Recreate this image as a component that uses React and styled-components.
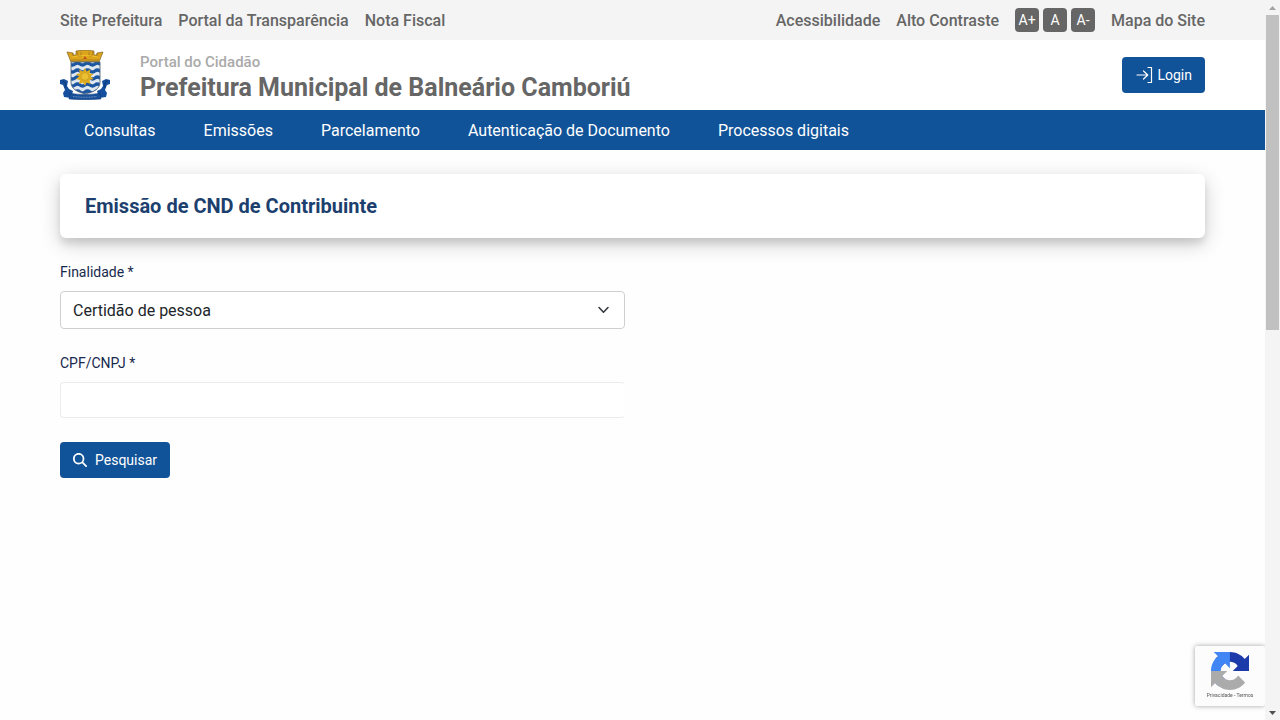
import React from "react";
import styled, { createGlobalStyle } from "styled-components";

const GlobalStyle = createGlobalStyle`
  *, *::before, *::after { box-sizing: border-box; }
  body {
    margin: 0;
    background: #fefefe;
    color: #212529;
    font: 400 16px/24px Roboto, "Liberation Sans", sans-serif;
    scrollbar-width: none;
  }
  button, input, select { font-family: inherit; }
  a { color: inherit; text-decoration: none; }
`;

const Shell = styled.div`
  display: grid;
  grid-template-columns: minmax(0, 1fr) 15px;
  min-height: 100vh;
`;

const Page = styled.div`
  min-width: 0;
`;

const TopBar = styled.div`
  display: flex;
  align-items: center;
  justify-content: space-between;
  min-height: 40px;
  padding: 0 60px;
  background: #f4f4f4;
  color: #666;
  font-weight: 500;
`;

const BarLink = styled.a`
  display: block;
  padding-top: 2px;
`;

const LinkGroup = styled.div`
  display: flex;
  align-items: center;
  gap: 16px;
`;

const SizeButtons = styled.div`
  display: flex;
  gap: 4px;
`;

const SizeButton = styled.button`
  width: 24px;
  height: 24px;
  padding: 0;
  border: 0;
  border-radius: 4px;
  background: #666;
  color: #fff;
  font-size: 14px;
  line-height: 24px;
  text-align: center;
`;

const Header = styled.header`
  display: flex;
  align-items: center;
  min-height: 70px;
  padding: 0 60px;
  background: #fff;
`;

const Brand = styled.a`
  display: flex;
  align-items: center;
  gap: 30px;
  margin-right: auto;
`;

const BrandText = styled.div`
  display: flex;
  flex-direction: column;
  padding-top: 4px;
`;

const Tagline = styled.span`
  color: #aaa;
  font-size: 15px;
  font-weight: 500;
  line-height: 20px;
`;

const CityName = styled.span`
  color: #666;
  font-size: 25px;
  font-weight: 700;
  line-height: 31px;
`;

const PrimaryButton = styled.button`
  display: inline-flex;
  align-items: center;
  gap: ${(p) => p.$gap}px;
  height: 36px;
  padding: 0 13px;
  border: 0;
  border-radius: 4px;
  background: #115398;
  color: #fff;
  font-size: 14px;
  line-height: 20px;
`;

const Nav = styled.nav`
  display: flex;
  gap: 48px;
  padding: 7px 84px;
  background: #115398;
  color: #fff;
`;

const Main = styled.main`
  padding: 24px 60px;
`;

const TitleCard = styled.section`
  padding: 20px 25px;
  border-radius: 6px;
  background: #fff;
  box-shadow: 0 6px 20px rgba(0, 0, 0, 0.2), 0 6px 6px rgba(0, 0, 0, 0.08);
`;

const Title = styled.h1`
  margin: 0;
  color: #1c3f6e;
  font-size: 20px;
  font-weight: 700;
  line-height: 24px;
`;

const Form = styled.form`
  display: flex;
  flex-direction: column;
  align-items: flex-start;
  gap: 24px;
  width: calc(50% - 8px);
  padding-top: 24px;
`;

const Field = styled.div`
  display: flex;
  flex-direction: column;
  gap: 9px;
  width: 100%;
`;

const Label = styled.label`
  color: #17294d;
  font-size: 14px;
  line-height: 20px;
`;

const SelectWrap = styled.div`
  display: grid;
  align-items: center;

  > * { grid-area: 1 / 1; }
  > svg {
    justify-self: end;
    margin-right: 13px;
    pointer-events: none;
  }
`;

const Select = styled.select`
  appearance: none;
  width: 100%;
  height: 38px;
  padding: 0 36px 0 12px;
  border: 1px solid #ced0d2;
  border-radius: 4px;
  background: #fff;
  color: #212529;
  font-size: 16px;
`;

const TextInput = styled.input`
  width: 100%;
  height: 36px;
  padding: 0 12px;
  border: 1px solid #ececec;
  border-right-color: transparent;
  border-radius: 4px;
  background: #fff;
  font-size: 16px;
`;

const ScrollTrack = styled.div`
  position: sticky;
  top: 0;
  z-index: 2;
  display: flex;
  flex-direction: column;
  align-items: center;
  justify-content: space-between;
  height: 100vh;
  background: #f4f4f4;
`;

const ScrollThumb = styled.div`
  width: 13px;
  height: 315px;
  background: #c1c1c1;
  margin-bottom: auto;
`;

const ScrollArrow = styled.div`
  display: grid;
  place-items: center;
  width: 15px;
  height: 15px;
`;

const CaptchaBadge = styled.aside`
  position: fixed;
  right: 15px;
  bottom: 14px;
  display: flex;
  flex-direction: column;
  align-items: center;
  width: 70px;
  height: 60px;
  padding-top: 6px;
  border-radius: 2px;
  background: #fcfcfc;
  box-shadow: 0 0 5px #a0a0a0;
`;

const CaptchaTerms = styled.div`
  color: #555;
  font-size: 5px;
  line-height: 10px;
  white-space: nowrap;
`;

const waves = [14, 21, 28, 35, 42];

function Crest() {
  return (
    <svg width="50" height="50" viewBox="0 0 50 50" aria-hidden="true">
      <defs>
        <clipPath id="shield">
          <path d="M11 12h29v20c0 7-6 10-14.500 12C17 42 11 39 11 32z" />
        </clipPath>
      </defs>
      <path
        d="M7 2l6 1v2h3V1l9-1 9 1v4h3V3l6-1-2 5-2 5H11L9 7z"
        fill="#dda51c"
        stroke="#80611f"
        strokeWidth=".7"
      />
      <path d="M13 3v4M17 1l1 5h3V2m8 0v4h3l1-5M37 3v4M11 10h28" fill="none" stroke="#9a711c" strokeWidth=".7" />
      <path d="M12 7q13-3 26 0" fill="none" stroke="#f0c02c" strokeWidth="1.200" />
      <path d="M25 6l2 3h-4z" fill="#c5521e" />
      <g clipPath="url(#shield)">
        <path d="M10 11h32v36H10z" fill="#dfe8f0" />
        {waves.map((y) => (
          <path
            key={y}
            d={`M5 ${y}q2.500-2 5 0t5 0 5 0 5 0 5 0 5 0 5 0 5 0`}
            fill="none"
            stroke="#1d56a0"
            strokeWidth="3.200"
          />
        ))}
      </g>
      <path
        d="M11 12h29v20c0 7-6 10-14.500 12C17 42 11 39 11 32z"
        fill="none"
        stroke="#56677c"
        strokeWidth=".9"
      />
      <path
        d="M25 18l1.500 3.500 4-2-1 4 4 .5-3 2.500 3 2.500-4 1 1 4-4-1.500-1.500 3.500-2-3.500-4 1.500 1-4-4-1 3-2.500-3-2.500 4-.5-1-4 4 2z"
        fill="#e0ac1c"
      />
      <circle cx="25" cy="26.500" r="3.800" fill="#ebc132" stroke="#b3912a" strokeWidth=".5" />
      <path d="M0 30l4-1 4 2-1 5 2 3 4 2-2 7-7-1-1-4 2-3-2-5-3-1zM50 30l-4-1-4 2 1 5-2 3-4 2 2 7 7-1 1-4-2-3 2-5 3-1z" fill="#154f9e" />
      <path d="M2 31c3 0 4 3 3 7M48 31c-3 0-4 3-3 7" fill="none" stroke="#0d326c" strokeWidth=".8" />
      <path d="M10 43c9 2 21 2 30 0l1 6c-10 1-22 1-32 0z" fill="#174f99" stroke="#0f3977" strokeWidth=".5" />
      <path d="M13 46.500q12 1.500 24 0" fill="none" stroke="#7f9fc6" strokeWidth="1" strokeDasharray="1 .6" />
    </svg>
  );
}

function LoginIcon() {
  return (
    <svg width="18" height="18" viewBox="0 0 18 18" fill="none" stroke="currentColor" strokeWidth="1.200" strokeLinecap="round" strokeLinejoin="round" aria-hidden="true">
      <path d="M2 9h10.500M8.500 5l4.300 4-4.300 4M13 1.500h3.500v15H13" />
    </svg>
  );
}

function SearchIcon() {
  return (
    <svg width="14" height="14" viewBox="0 0 512 512" fill="currentColor" aria-hidden="true">
      <path d="M416 208c0 45.900-14.900 88.300-40 122.700L502.600 457.400c12.500 12.500 12.500 32.800 0 45.300s-32.800 12.500-45.300 0L330.700 376c-34.400 25.200-76.800 40-122.700 40C93.100 416 0 322.900 0 208S93.100 0 208 0S416 93.100 416 208zM208 352a144 144 0 1 0 0-288 144 144 0 1 0 0 288z" />
    </svg>
  );
}

function ChevronIcon() {
  return (
    <svg width="16" height="16" viewBox="0 0 16 16" fill="none" stroke="#343a40" strokeWidth="1.600" strokeLinecap="round" strokeLinejoin="round" aria-hidden="true">
      <path d="M3 5.500l4.500 4.700 4.500-4.700" />
    </svg>
  );
}

function CaptchaLogo() {
  return (
    <svg width="38" height="38" viewBox="0 0 64 64" aria-hidden="true">
      <path
        d="M64 31.955a33.300 33.300 0 0 0-.033-1.370V4.687l-7.160 7.160C50.948 4.674 42.033.093 32.050.093c-10.400 0-19.622 4.960-25.458 12.640l11.736 11.860a15.550 15.550 0 0 1 4.754-5.334c2.050-1.600 4.952-2.906 8.968-2.906.485 0 .860.057 1.135.163 4.976.393 9.288 3.140 11.828 7.124l-8.307 8.307L64 31.953"
        fill="#1c3aa9"
      />
      <path
        d="M31.862.094a33.300 33.300 0 0 0-1.370.033H4.594l7.160 7.160C4.580 13.147 0 22.060 0 32.046c0 10.400 4.960 19.622 12.640 25.458L24.500 45.768a15.550 15.550 0 0 1-5.334-4.754c-1.600-2.050-2.906-4.952-2.906-8.968 0-.485.057-.860.163-1.135.393-4.976 3.140-9.288 7.124-11.828l8.307 8.307L31.860.095"
        fill="#4285f4"
      />
      <path
        d="M.001 32.045a33.300 33.300 0 0 0 .033 1.370v25.898l7.160-7.160c5.860 7.173 14.774 11.754 24.760 11.754 10.400 0 19.622-4.960 25.458-12.640l-11.736-11.860a15.550 15.550 0 0 1-4.754 5.334c-2.050 1.600-4.952 2.906-8.968 2.906-.485 0-.860-.057-1.135-.163-4.976-.393-9.288-3.140-11.828-7.124l8.307-8.307c-10.522.040-22.400.066-27.295-.005"
        fill="#ababab"
      />
    </svg>
  );
}

const navItems = ["Consultas", "Emissões", "Parcelamento", "Autenticação de Documento", "Processos digitais"];

export default function App() {
  return (
    <>
      <GlobalStyle />
      <Shell>
        <Page>
          <TopBar>
            <LinkGroup>
              <BarLink href="#site">Site Prefeitura</BarLink>
              <BarLink href="#transparencia">Portal da Transparência</BarLink>
              <BarLink href="#nota">Nota Fiscal</BarLink>
            </LinkGroup>
            <LinkGroup>
              <BarLink href="#acessibilidade">Acessibilidade</BarLink>
              <BarLink href="#contraste">Alto Contraste</BarLink>
              <SizeButtons>
                <SizeButton type="button">A+</SizeButton>
                <SizeButton type="button">A</SizeButton>
                <SizeButton type="button">A-</SizeButton>
              </SizeButtons>
              <BarLink href="#mapa">Mapa do Site</BarLink>
            </LinkGroup>
          </TopBar>
          <Header>
            <Brand href="#inicio">
              <Crest />
              <BrandText>
                <Tagline>Portal do Cidadão</Tagline>
                <CityName>Prefeitura Municipal de Balneário Camboriú</CityName>
              </BrandText>
            </Brand>
            <PrimaryButton type="button" $gap={4}>
              <LoginIcon />
              Login
            </PrimaryButton>
          </Header>
          <Nav>
            {navItems.map((item) => (
              <BarLink key={item} href="#menu">{item}</BarLink>
            ))}
          </Nav>
          <Main>
            <TitleCard>
              <Title>Emissão de CND de Contribuinte</Title>
            </TitleCard>
            <Form onSubmit={(e) => e.preventDefault()}>
              <Field>
                <Label htmlFor="finalidade">Finalidade *</Label>
                <SelectWrap>
                  <Select id="finalidade">
                    <option>Certidão de pessoa</option>
                  </Select>
                  <ChevronIcon />
                </SelectWrap>
              </Field>
              <Field>
                <Label htmlFor="documento">CPF/CNPJ *</Label>
                <TextInput id="documento" type="text" />
              </Field>
              <PrimaryButton type="submit" $gap={8}>
                <SearchIcon />
                Pesquisar
              </PrimaryButton>
            </Form>
          </Main>
          <CaptchaBadge>
            <CaptchaLogo />
            <CaptchaTerms>
              <a href="#privacidade">Privacidade</a> - <a href="#termos">Termos</a>
            </CaptchaTerms>
          </CaptchaBadge>
        </Page>
        <ScrollTrack aria-hidden="true">
          <ScrollArrow>
            <svg width="7" height="4" viewBox="0 0 7 4"><path d="M0 4l3.500-4L7 4z" fill="#a3a3a3" /></svg>
          </ScrollArrow>
          <ScrollThumb />
          <ScrollArrow>
            <svg width="7" height="4" viewBox="0 0 7 4"><path d="M0 0l3.500 4L7 0z" fill="#505050" /></svg>
          </ScrollArrow>
        </ScrollTrack>
      </Shell>
    </>
  );
}
